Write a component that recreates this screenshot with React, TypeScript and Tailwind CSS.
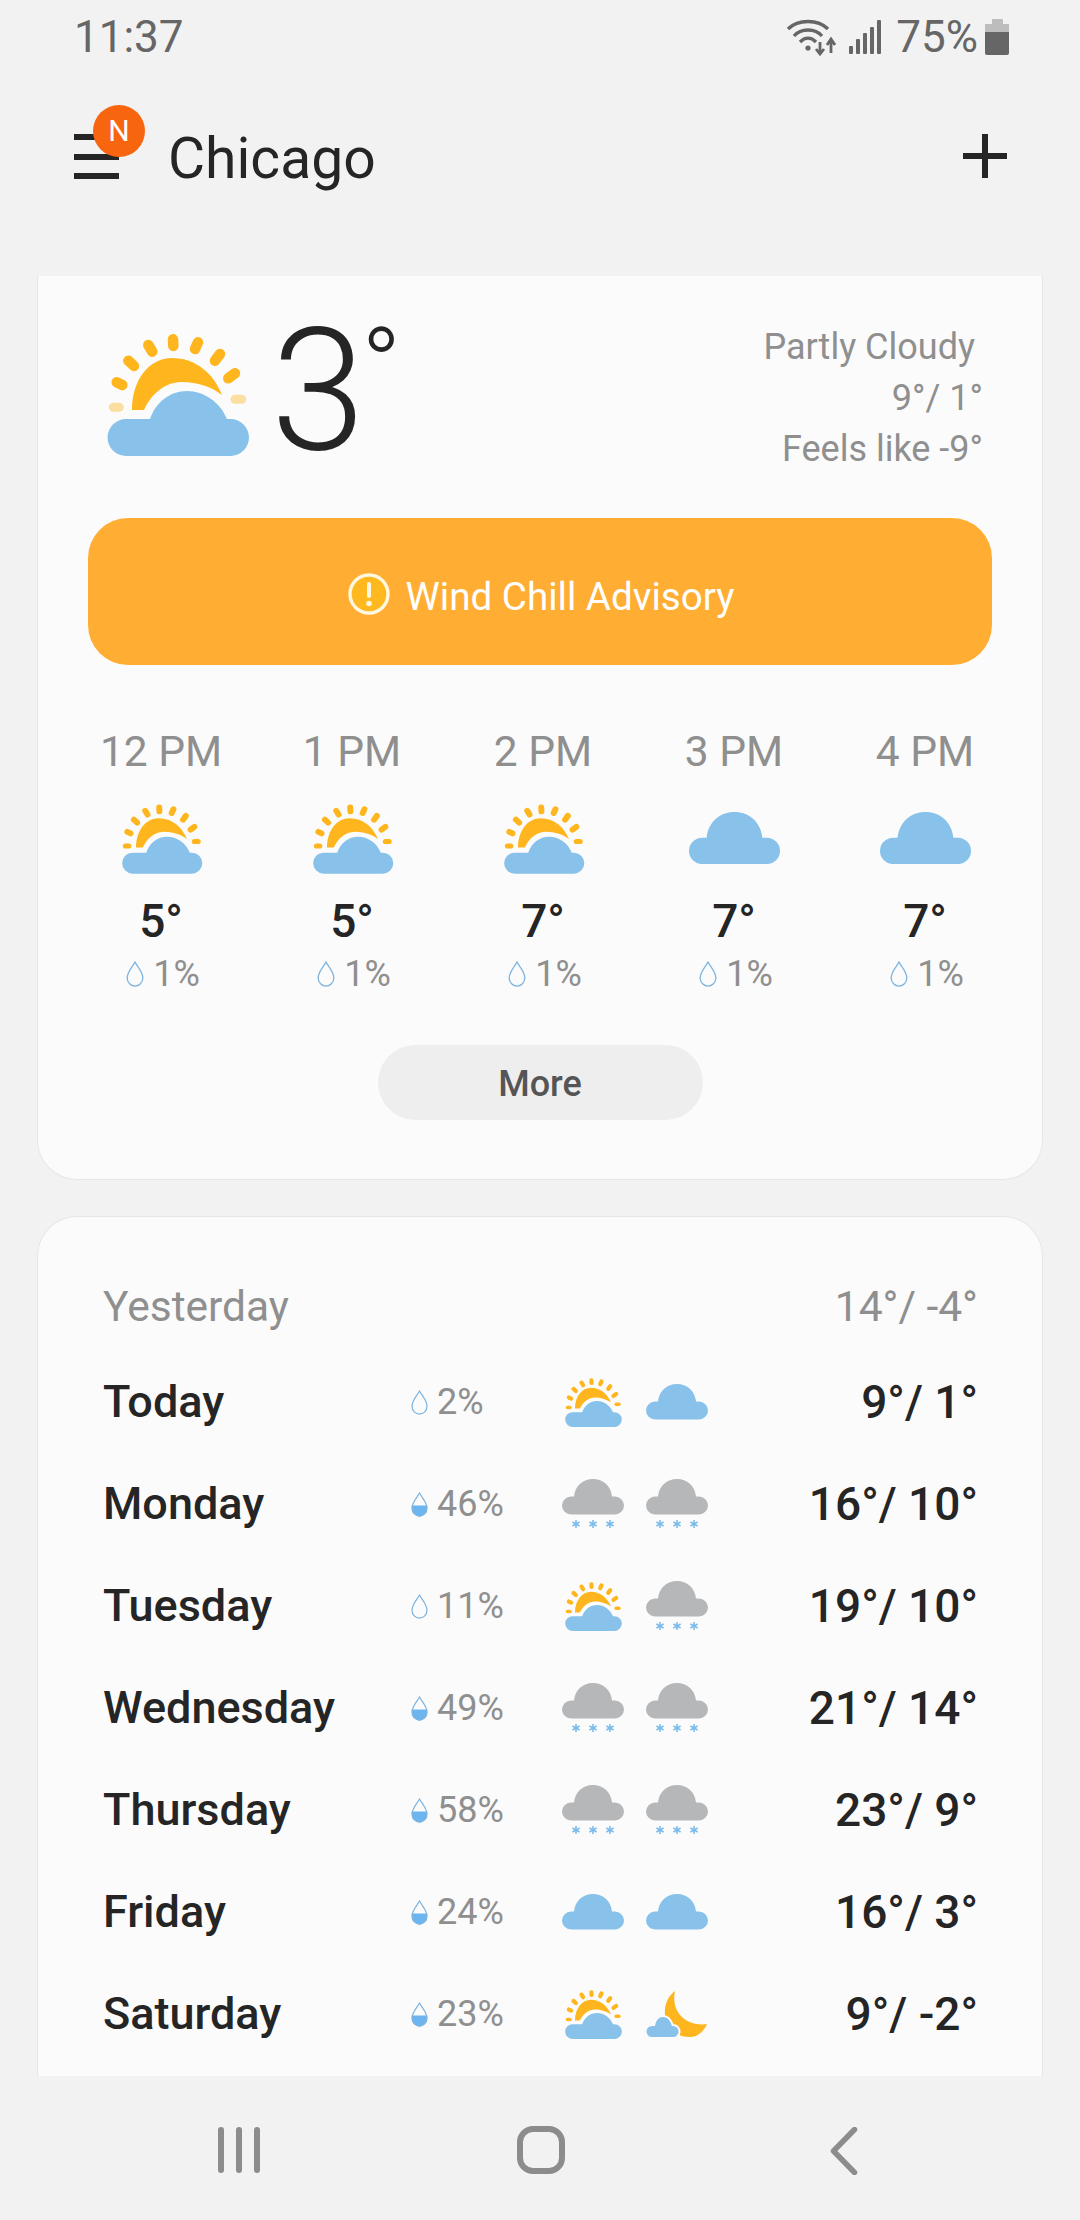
import React from "react";

const CLOUD_BLUE = "#88c2ea";
const SUN = "#ffb61e";

function CloudSun({ w, faded }: { w: number; faded?: boolean }) {
  const rays = [
    [14.7, 56.3, 20.3, 59],
    [26.3, 34.7, 32, 40],
    [46.3, 19, 50.3, 25.7],
    [71, 13.3, 71.3, 20],
    [96, 16.3, 93, 23],
    [118, 28, 113, 34.7],
    [133, 47.3, 126.3, 52.3],
  ];
  const soft = faded ? "#fbdfa0" : SUN;
  return (
    <svg width={w} height={(w * 134) / 150} viewBox="0 0 150 134" className="block">
      <path d="M30 84 C30 54 47 32 70 32 C94 32 112 48 120 69 C110 61 95 56 80 56 C65 56 50 66 42 84 Z" fill={SUN} />
      {rays.map((r, i) => (
        <line key={i} x1={r[0]} y1={r[1]} x2={r[2]} y2={r[3]} stroke={SUN} strokeWidth="10.5" strokeLinecap="round" />
      ))}
      <line x1="133" y1="73.3" x2="139.7" y2="73.3" stroke={soft} strokeWidth="9" strokeLinecap="round" />
      <line x1="11.3" y1="81.3" x2="17.3" y2="81.3" stroke={soft} strokeWidth="9" strokeLinecap="round" />
      <path d="M24 130 A18.5 18.5 0 0 1 24 93 H48 C54 76 68 65 85 65 C102 65 118 76 125 93 H128.5 A18.5 18.5 0 0 1 128.5 130 Z" fill={CLOUD_BLUE} />
    </svg>
  );
}

function Cloud({ w, color = CLOUD_BLUE }: { w: number; color?: string }) {
  return (
    <svg width={w} height={(w * 36) / 62} viewBox="0 0 62 36" className="block">
      <path d="M9 35.5 A9 9 0 0 1 9 17.5 H12 C13 7 21 0 31 0 C41 0 49 7 50 17.5 H53 A9 9 0 0 1 53 35.5 Z" fill={color} />
    </svg>
  );
}

function Star({ x }: { x: number }) {
  return (
    <g stroke="#7cbcea" strokeWidth="1.6">
      <line x1={x} y1="41" x2={x} y2="49" />
      <line x1={x - 3.6} y1="43" x2={x + 3.6} y2="47" />
      <line x1={x - 3.6} y1="47" x2={x + 3.6} y2="43" />
    </g>
  );
}

function Snow() {
  return (
    <svg width="62" height="50" viewBox="0 0 62 50" className="block">
      <path d="M9 35.5 A9 9 0 0 1 9 17.5 H12 C13 7 21 0 31 0 C41 0 49 7 50 17.5 H53 A9 9 0 0 1 53 35.5 Z" fill="#b5b7b9" />
      <Star x={14} />
      <Star x={31} />
      <Star x={48} />
    </svg>
  );
}

function Moon() {
  return (
    <svg width="62" height="46" viewBox="0 0 62 46" className="block">
      <path d="M29 0 C12 12 16 46 44 46 C52 46 58 40 61 33 C44 36 24 24 29 0 Z" fill={SUN} />
      <path d="M6 46 A5.5 5.5 0 0 1 6 35 H9 C10 29 13 26 17 26 C21 26 24 29 26 35 H27 A5.5 5.5 0 0 1 27 46 Z" fill={CLOUD_BLUE} stroke="#fbfbfb" strokeWidth="4" paintOrder="stroke" />
    </svg>
  );
}

function Drop({ half, big }: { half?: boolean; big?: boolean }) {
  return (
    <svg width={big ? 18 : 17} height={big ? 26 : 25} viewBox="0 0 16 24" className="block shrink-0">
      {half && <path d="M0.6 13 H15.4 C15.9 19 12 23.4 8 23.4 C4 23.4 0.1 19 0.6 13 Z" fill="#6db5ee" />}
      <path d="M8 1 C5.5 5.5 0.8 10 0.8 15.6 C0.8 20 4.2 23.2 8 23.2 C11.8 23.2 15.2 20 15.2 15.6 C15.2 10 10.5 5.5 8 1 Z" fill="none" stroke="#7fb5e0" strokeWidth="1.2" />
    </svg>
  );
}

function StatusIcons() {
  return (
    <>
      <svg width="50" height="38" viewBox="0 0 50 38" className="block">
        <g fill="none" stroke="#666" strokeWidth="3.4">
          <path d="M1 11 C11 1 31 1 41 11" />
          <path d="M7 18 C14 10 28 10 35 18" />
          <path d="M13 24 C18 19 24 19 29 24" />
        </g>
        <circle cx="21" cy="30" r="2.6" fill="#666" />
        <path d="M33 24 V35 M29 31 L33 36 L37 31" fill="none" stroke="#666" strokeWidth="2.8" />
        <path d="M44 35 V22 M40 27 L44 21 L48 27" fill="none" stroke="#666" strokeWidth="2.8" />
      </svg>
      <svg width="32" height="34" viewBox="0 0 32 34" className="ml-[12px] block">
        <g fill="#666">
          <rect x="0" y="26" width="4" height="8" rx="1" />
          <rect x="7" y="19" width="4" height="15" rx="1" />
          <rect x="14" y="13" width="4" height="21" rx="1" />
          <rect x="21" y="7" width="4" height="27" rx="1" />
          <rect x="28" y="0" width="4" height="34" rx="1" />
        </g>
      </svg>
    </>
  );
}

const hours = [
  { t: "12 PM", v: "5°", sun: true },
  { t: "1 PM", v: "5°", sun: true },
  { t: "2 PM", v: "7°", sun: true },
  { t: "3 PM", v: "7°", sun: false },
  { t: "4 PM", v: "7°", sun: false },
];

type Ic = "sun" | "cloud" | "snow" | "moon";
const days: { d: string; p: string; half: boolean; a: Ic; b: Ic; t: string }[] = [
  { d: "Today", p: "2%", half: false, a: "sun", b: "cloud", t: "9°/ 1°" },
  { d: "Monday", p: "46%", half: true, a: "snow", b: "snow", t: "16°/ 10°" },
  { d: "Tuesday", p: "11%", half: false, a: "sun", b: "snow", t: "19°/ 10°" },
  { d: "Wednesday", p: "49%", half: true, a: "snow", b: "snow", t: "21°/ 14°" },
  { d: "Thursday", p: "58%", half: true, a: "snow", b: "snow", t: "23°/ 9°" },
  { d: "Friday", p: "24%", half: true, a: "cloud", b: "cloud", t: "16°/ 3°" },
  { d: "Saturday", p: "23%", half: true, a: "sun", b: "moon", t: "9°/ -2°" },
];

function DayIcon({ k }: { k: Ic }) {
  if (k === "sun") return <CloudSun w={60} />;
  if (k === "cloud") return <Cloud w={62} />;
  if (k === "snow") return <Snow />;
  return <Moon />;
}

export default function App() {
  return (
    <div className="flex h-[2220px] w-[1080px] flex-col overflow-hidden bg-[#f2f2f2] font-['Roboto',sans-serif] text-[#252525]">
      <div className="flex h-[72px] shrink-0 items-center justify-between pl-[74px] pr-[71px] pt-[2px] text-[44px] leading-none text-[#666]">
        <span>11:37</span>
        <div className="flex items-center">
          <StatusIcons />
          <span className="ml-[15px]">75%</span>
          <div className="ml-[7px] flex h-[36px] w-[24px] flex-col items-center">
            <div className="h-[5px] w-[11px] rounded-t-[1px] bg-[#bdbdbd]" />
            <div className="h-[8px] w-full bg-[#bdbdbd]" />
            <div className="h-[23px] w-full rounded-b-[2px] bg-[#666]" />
          </div>
        </div>
      </div>

      <div className="flex h-[204px] shrink-0 items-start pl-[74px] pr-[73px] pt-[61px]">
        <div className="relative mt-[1px] flex h-[45px] w-[45px] flex-col justify-between">
          <div className="h-[6px] bg-[#252525]" />
          <div className="h-[6px] bg-[#252525]" />
          <div className="h-[6px] bg-[#252525]" />
          <div className="absolute left-[19px] top-[-29px] flex h-[52px] w-[52px] items-center justify-center rounded-full bg-[#f7660f] text-[30px] leading-none text-white">
            N
          </div>
        </div>
        <div className="ml-[49px] mt-[-7px] text-[57px] leading-[66px]">Chicago</div>
        <svg width="44" height="44" viewBox="0 0 44 44" className="ml-auto mt-[1px] block">
          <path d="M19 0h6v19h19v6H25v19h-6V25H0v-6h19z" fill="#252525" />
        </svg>
      </div>

      <div className="mx-[37px] flex min-h-0 flex-1 flex-col gap-[36px] overflow-hidden">
        <div className="h-[904px] shrink-0 rounded-b-[40px] border-x border-b border-[#e6e6e6] bg-[#fbfbfb]">
          <div className="relative flex h-[242px] pl-[64px] pt-[50px]">
            <CloudSun w={150} faded />
            <div className="ml-[19px] mt-[-20px] text-[170px] font-light leading-[170px] text-[#252525]">3</div>
            <div className="ml-[-4px] mt-[-12px] text-[106px] font-light leading-[106px]">°</div>
            <div className="absolute right-[59px] top-[46px] flex flex-col items-end text-[36px] leading-[51px] text-[#8f8f8f]">
              <span className="pr-[8px]">Partly Cloudy</span>
              <span>9°/ 1°</span>
              <span>Feels like -9°</span>
            </div>
          </div>
          <div className="mx-[50px] flex h-[147px] items-center justify-center rounded-[40px] bg-[#ffae33] pl-[2px] pt-[10px] text-[38.6px] text-white">
            <svg width="42" height="42" viewBox="0 0 42 42" className="mr-[16px] mt-[-6px] block">
              <circle cx="21" cy="21" r="19" fill="#ffb91e" stroke="#fff7e0" strokeWidth="3.4" />
              <rect x="19" y="9" width="4" height="16" rx="2" fill="#fff7e0" />
              <circle cx="21" cy="30.5" r="2.8" fill="#fff7e0" />
            </svg>
            Wind Chill Advisory
          </div>
          <div className="mx-auto mt-[62px] grid w-[955px] translate-x-[3px] grid-cols-5">
            {hours.map((h) => (
              <div key={h.t} className="flex flex-col items-center">
                <div className="text-[42.5px] leading-[50px] text-[#8f8f8f]">{h.t}</div>
                <div className="mt-[19px] flex h-[84px] items-center justify-center">
                  {h.sun ? <CloudSun w={85} /> : <Cloud w={91} />}
                </div>
                <div className="mt-[16px] text-[46px] font-medium leading-[50px] text-[#252525]">{h.v}</div>
                <div className="mt-[3px] flex items-center pl-[4px] text-[36px] leading-[50px] text-[#8f8f8f]">
                  <Drop big />
                  <span className="ml-[9px]">1%</span>
                </div>
              </div>
            ))}
          </div>
          <div className="mx-auto mt-[46px] flex h-[75px] w-[325px] items-center justify-center rounded-full bg-[#eeeeee] pt-[3px] text-[36px] font-medium text-[#555]">
            More
          </div>
        </div>

        <div className="min-h-[900px] shrink-0 rounded-t-[40px] border-x border-t border-[#e6e6e6] bg-[#fbfbfb] pl-[65px] pr-[64px] pt-[64px]">
          <div className="flex h-[52px] items-center justify-between text-[42.5px] text-[#8f8f8f]">
            <span>Yesterday</span>
            <span>14°/ -4°</span>
          </div>
          <div className="mt-[18px] flex flex-col">
            {days.map((r) => (
              <div key={r.d} className="grid h-[102px] grid-cols-[308px_140px_84px_84px_1fr] items-center">
                <div className="text-[45px] font-medium text-[#252525]">{r.d}</div>
                <div className="flex items-center text-[36px] text-[#8f8f8f]">
                  <Drop half={r.half} />
                  <span className="ml-[9px]">{r.p}</span>
                </div>
                <div className="flex justify-center"><DayIcon k={r.a} /></div>
                <div className="flex justify-center"><DayIcon k={r.b} /></div>
                <div className="text-right text-[46px] font-medium text-[#252525]">{r.t}</div>
              </div>
            ))}
          </div>
        </div>
      </div>

      <div className="flex h-[144px] shrink-0 items-start pt-[51px]">
        <div className="ml-[218px] flex h-[46px] gap-[12px]">
          <div className="w-[6px] rounded-full bg-[#8c8c8c]" />
          <div className="w-[6px] rounded-full bg-[#8c8c8c]" />
          <div className="w-[6px] rounded-full bg-[#8c8c8c]" />
        </div>
        <div className="ml-[257px] mt-[-1px] h-[48px] w-[48px] rounded-[16px] border-[6px] border-[#8c8c8c]" />
        <svg width="28" height="48" viewBox="0 0 28 48" className="ml-[265px] block">
          <path d="M24.5 2.5 L3.5 24 L24.5 45.5" fill="none" stroke="#8c8c8c" strokeWidth="5.5" strokeLinecap="round" strokeLinejoin="round" />
        </svg>
      </div>
    </div>
  );
}
